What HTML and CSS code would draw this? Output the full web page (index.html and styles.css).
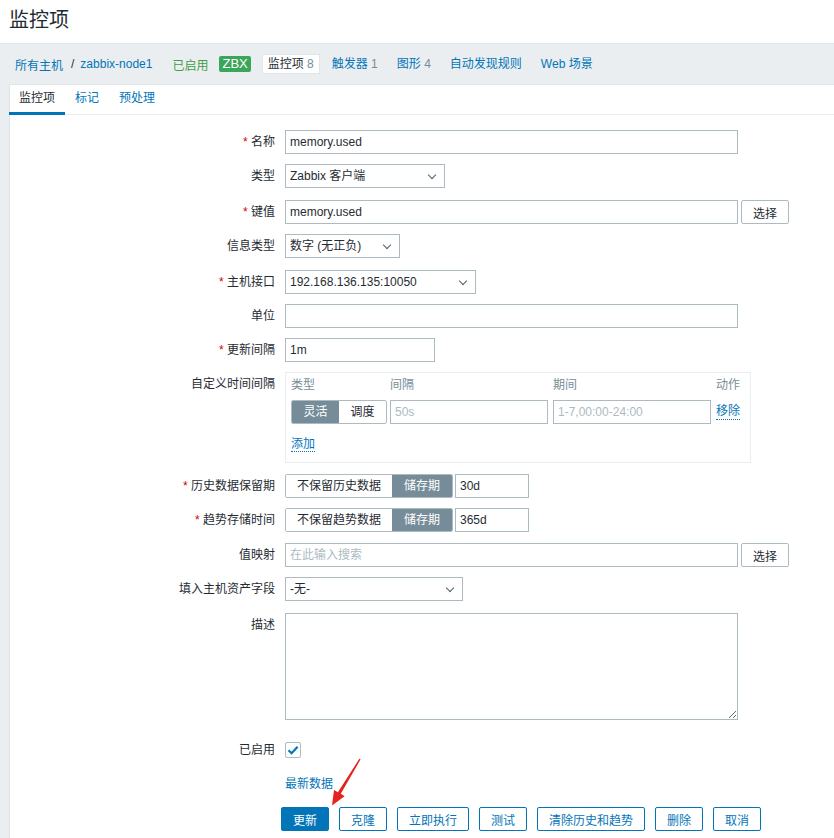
FILE: index.html
```html
<!DOCTYPE html>
<html lang="zh-CN">
<head>
<meta charset="utf-8">
<title>监控项</title>
<link rel="stylesheet" href="styles.css">
</head>
<body>
<header class="page-title">监控项</header>
<div class="main">
  <nav class="crumbs">
    <a class="link">所有主机</a>
    <span class="sep">/</span>
    <a class="link">zabbix-node1</a>
    <span class="status-on">已启用</span>
    <span class="badge">ZBX</span>
    <span class="nav-item current">监控项 <em>8</em></span>
    <a class="nav-item link">触发器 <em>1</em></a>
    <a class="nav-item link">图形 <em>4</em></a>
    <a class="nav-item link">自动发现规则</a>
    <a class="nav-item link">Web 场景</a>
  </nav>
  <section class="panel">
    <div class="tabs">
      <span class="tab active">监控项</span>
      <span class="tab">标记</span>
      <span class="tab">预处理</span>
    </div>
    <form class="form">
      <div class="row">
        <label class="lbl"><i class="req">*</i> 名称</label>
        <div class="field"><input class="inp w-full" value="memory.used"></div>
      </div>
      <div class="row gap12">
        <label class="lbl">类型</label>
        <div class="field"><div class="sel w160">Zabbix 客户端<span class="chev"></span></div></div>
      </div>
      <div class="row">
        <label class="lbl"><i class="req">*</i> 键值</label>
        <div class="field"><input class="inp w-full" value="memory.used"><button type="button" class="btn-grey">选择</button></div>
      </div>
      <div class="row gap12">
        <label class="lbl">信息类型</label>
        <div class="field"><div class="sel w115">数字 (无正负)<span class="chev"></span></div></div>
      </div>
      <div class="row">
        <label class="lbl"><i class="req">*</i> 主机接口</label>
        <div class="field"><div class="sel w191">192.168.136.135:10050<span class="chev"></span></div></div>
      </div>
      <div class="row">
        <label class="lbl">单位</label>
        <div class="field"><input class="inp w-full" value=""></div>
      </div>
      <div class="row">
        <label class="lbl"><i class="req">*</i> 更新间隔</label>
        <div class="field"><input class="inp w150" value="1m"></div>
      </div>
      <div class="row gap11">
        <label class="lbl">自定义时间间隔</label>
        <div class="field">
          <div class="intervals">
            <div class="int-head">
              <span class="c-type">类型</span>
              <span class="c-int">间隔</span>
              <span class="c-per">期间</span>
              <span class="c-act">动作</span>
            </div>
            <div class="int-row">
              <div class="seg c-type">
                <span class="seg-item on w48">灵活</span><span class="seg-item w47">调度</span>
              </div>
              <input class="inp w158 ph" value="50s">
              <input class="inp w158 ph" value="1-7,00:00-24:00">
              <a class="dotlink remove">移除</a>
            </div>
            <div class="int-add"><a class="dotlink">添加</a></div>
          </div>
        </div>
      </div>
      <div class="row">
        <label class="lbl"><i class="req">*</i> 历史数据保留期</label>
        <div class="field">
          <div class="seg"><span class="seg-item w107">不保留历史数据</span><span class="seg-item on w60">储存期</span></div>
          <input class="inp w74" value="30d">
        </div>
      </div>
      <div class="row gap11">
        <label class="lbl"><i class="req">*</i> 趋势存储时间</label>
        <div class="field">
          <div class="seg"><span class="seg-item w107">不保留趋势数据</span><span class="seg-item on w60">储存期</span></div>
          <input class="inp w74" value="365d">
        </div>
      </div>
      <div class="row">
        <label class="lbl">值映射</label>
        <div class="field"><input class="inp w-full" placeholder="在此输入搜索"><button type="button" class="btn-grey">选择</button></div>
      </div>
      <div class="row gap12">
        <label class="lbl">填入主机资产字段</label>
        <div class="field"><div class="sel w178">-无-<span class="chev"></span></div></div>
      </div>
      <div class="row gap18">
        <label class="lbl">描述</label>
        <div class="field"><textarea class="txt"></textarea></div>
      </div>
      <div class="row">
        <label class="lbl">已启用</label>
        <div class="field"><span class="chk"><svg width="12" height="10" viewBox="0 0 12 10"><path d="M1.5 5.2 L4.6 8.2 L10.6 1.8" fill="none" stroke="#0275b8" stroke-width="2.2"/></svg></span></div>
      </div>
      <div class="row gap11">
        <span class="lbl"></span>
        <div class="field"><a class="link latest">最新数据</a></div>
      </div>
      <div class="row">
        <span class="lbl"></span>
        <div class="field buttons">
          <button type="button" class="btn primary">更新</button>
          <button type="button" class="btn">克隆</button>
          <button type="button" class="btn">立即执行</button>
          <button type="button" class="btn">测试</button>
          <button type="button" class="btn">清除历史和趋势</button>
          <button type="button" class="btn">删除</button>
          <button type="button" class="btn">取消</button>
        </div>
      </div>
    </form>
  </section>
</div>
<svg class="arrow" width="834" height="838" viewBox="0 0 834 838">
  <polygon points="360.6,759.3 340.8,793.7 344.6,796.3 332,805.5 334.0,790.1 337.9,792.2 359.4,758.7" fill="#e5231c"/>
</svg>
</body>
</html>
```
FILE: styles.css
```css
* { box-sizing: border-box; }
html, body { margin: 0; padding: 0; }
body {
  font-family: "Liberation Sans", "Noto Sans CJK SC", sans-serif;
  font-size: 12px;
  color: #1f2c33;
  background: #ebeef0;
  width: 834px;
  height: 838px;
  overflow: hidden;
  position: relative;
}
.page-title {
  height: 43px;
  background: #fff;
  font-size: 20px;
  line-height: 40px;
  padding-left: 9px;
  color: #1f2c33;
}
.main {
  border-top: 1px solid #dfe4e7;
  padding-left: 9px;
}
.crumbs {
  height: 40px;
  display: flex;
  align-items: center;
  padding-left: 6px;
}
.link { color: #0275b8; text-decoration: none; cursor: pointer; }
.sep { margin: 0 6px 0 8px; color: #1f2c33; }
.status-on { color: #429e47; margin-left: 20px; }
.badge {
  margin-left: 11px;
  background: #3ba55a;
  color: #fff;
  font-size: 13px;
  height: 16px;
  line-height: 16px;
  padding: 0 3px;
  border-radius: 2px;
}
.nav-item {
  padding: 0 6px;
  height: 20px;
  line-height: 18px;
  margin-left: 5px;
  border: 1px solid transparent;
}
.nav-item em { font-style: normal; color: #768d99; }
.nav-item.current {
  background: #fff;
  border-color: #dfe4e7;
  margin-left: 11px;
  padding: 0 5px;
  color: #1f2c33;
}
.panel {
  background: #fff;
  border-top: 1px solid #dfe4e7;
  border-left: 1px solid #dfe4e7;
  height: 760px;
}
.tabs {
  display: flex;
  height: 30px;
  border-bottom: 1px solid #ebeef0;
}
.tab {
  padding: 0 10px;
  line-height: 27px;
  height: 30px;
  color: #0275b8;
  border-bottom: 3px solid transparent;
}
.tab.active { color: #1f2c33; border-bottom-color: #0275b8; margin-left: -1px; }
.form { padding-top: 15px; }
.row {
  display: grid;
  grid-template-columns: 265px 1fr;
  column-gap: 10px;
  margin-bottom: 10px;
  min-height: 24px;
}
.row.gap11 { margin-bottom: 11px; }
.row.gap12 { margin-bottom: 12px; }
.row.gap18 { margin-bottom: 18px; }
.lbl {
  text-align: right;
  line-height: 24px;
  white-space: nowrap;
}
.req { font-style: normal; color: #d40000; }
.field { display: flex; align-items: flex-start; }
.inp {
  height: 24px;
  border: 1px solid #acbbc2;
  padding: 0 4px;
  font: inherit;
  color: #1f2c33;
  background: #fff;
  outline: none;
}
.inp::placeholder { color: #acbbc2; }
.inp.ph { color: #acbbc2; }
.w-full { width: 453px; }
.w150 { width: 150px; }
.w158 { width: 158px; }
.w74 { width: 74px; margin-left: 2px; }
.sel {
  position: relative;
  height: 24px;
  line-height: 22px;
  border: 1px solid #acbbc2;
  padding: 0 20px 0 4px;
  white-space: nowrap;
  background: #fff;
}
.w160 { width: 160px; }
.w115 { width: 115px; }
.w191 { width: 191px; }
.w178 { width: 178px; }
.chev {
  position: absolute;
  right: 9px;
  top: 7px;
  width: 6px;
  height: 6px;
  border-right: 1px solid #4f5f67;
  border-bottom: 1px solid #4f5f67;
  transform: rotate(45deg);
}
.btn-grey {
  margin-left: 3px;
  height: 24px;
  width: 48px;
  border: 1px solid #acbbc2;
  background: #fff;
  font: inherit;
  color: #1f2c33;
  border-radius: 2px;
  padding: 0;
}
.intervals {
  width: 466px;
  height: 91px;
  border: 1px solid #ebeef0;
  padding: 0 5px;
}
.int-head {
  display: flex;
  height: 24px;
  line-height: 24px;
  color: #768d99;
}
.int-head .c-type { width: 99px; }
.int-head .c-int { width: 163px; }
.int-head .c-per { width: 163px; }
.int-row {
  display: flex;
  align-items: flex-start;
  margin-top: 3px;
}
.int-row .seg { margin-right: 3px; }
.int-row .inp + .inp { margin-left: 5px; }
.int-row .remove { margin-left: 5px; margin-top: 3px; line-height: 16px; }
.int-add { margin-top: 10px; }
.dotlink {
  color: #0275b8;
  border-bottom: 1px dotted #0275b8;
  cursor: pointer;
}
.seg {
  display: flex;
  height: 24px;
  border: 1px solid #acbbc2;
  border-radius: 2px;
  overflow: hidden;
}
.seg-item {
  line-height: 22px;
  text-align: center;
  background: #fff;
  color: #1f2c33;
}
.seg-item.on { background: #768d99; color: #fff; }
.w48 { width: 47px; }
.w47 { width: 47px; }
.w107 { width: 106px; }
.w60 { width: 60px; }
.txt {
  width: 453px;
  height: 107px;
  border: 1px solid #acbbc2;
  font: inherit;
  resize: both;
  display: block;
  outline: none;
}
.chk {
  margin-top: 4px;
  width: 16px;
  height: 16px;
  border: 1px solid #acbbc2;
  border-radius: 2px;
  display: flex;
  align-items: center;
  justify-content: center;
}
.latest { line-height: 24px; }
.buttons { gap: 10px; margin-left: -4px; }
.btn {
  height: 24px;
  padding: 0 11px;
  border: 1px solid #0275b8;
  border-radius: 2px;
  background: #fff;
  color: #0275b8;
  font: inherit;
  white-space: nowrap;
}
.btn.primary { background: #0275b8; color: #fff; }
.arrow { position: absolute; left: 0; top: 0; pointer-events: none; }
```
